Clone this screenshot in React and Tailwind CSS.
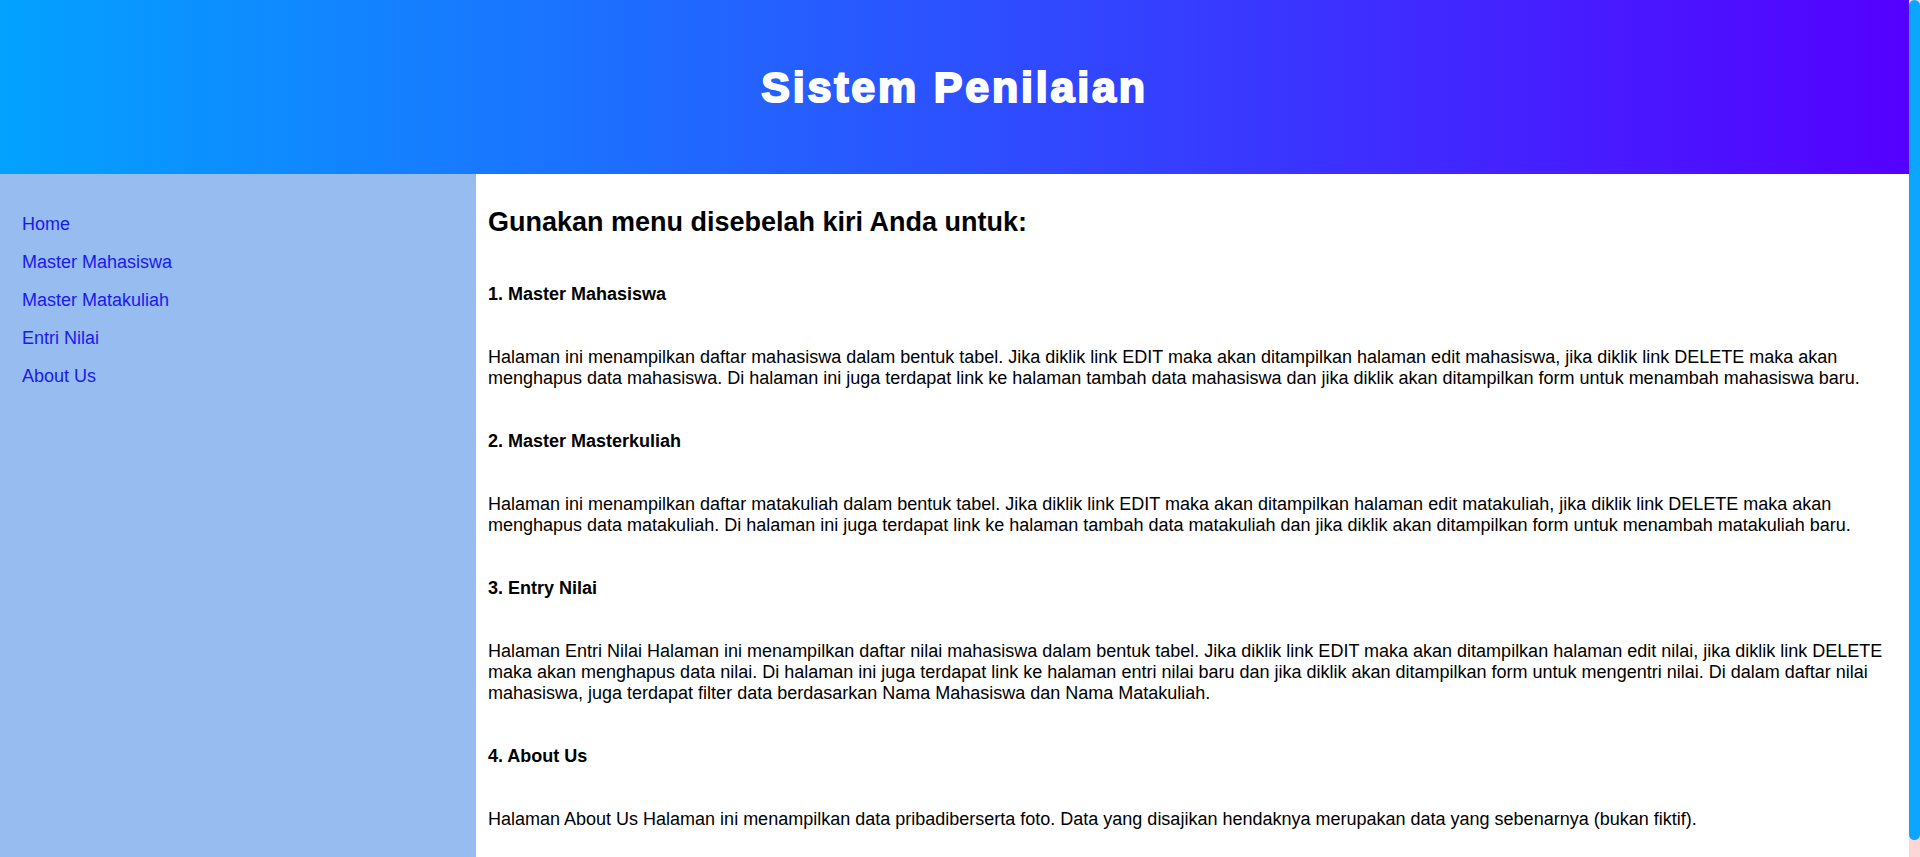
import React from 'react';

const menu = ['Home', 'Master Mahasiswa', 'Master Matakuliah', 'Entri Nilai', 'About Us'];

const sections = [
  {
    title: '1. Master Mahasiswa',
    text: 'Halaman ini menampilkan daftar mahasiswa dalam bentuk tabel. Jika diklik link EDIT maka akan ditampilkan halaman edit mahasiswa, jika diklik link DELETE maka akan menghapus data mahasiswa. Di halaman ini juga terdapat link ke halaman tambah data mahasiswa dan jika diklik akan ditampilkan form untuk menambah mahasiswa baru.',
  },
  {
    title: '2. Master Masterkuliah',
    text: 'Halaman ini menampilkan daftar matakuliah dalam bentuk tabel. Jika diklik link EDIT maka akan ditampilkan halaman edit matakuliah, jika diklik link DELETE maka akan menghapus data matakuliah. Di halaman ini juga terdapat link ke halaman tambah data matakuliah dan jika diklik akan ditampilkan form untuk menambah matakuliah baru.',
  },
  {
    title: '3. Entry Nilai',
    text: 'Halaman Entri Nilai Halaman ini menampilkan daftar nilai mahasiswa dalam bentuk tabel. Jika diklik link EDIT maka akan ditampilkan halaman edit nilai, jika diklik link DELETE maka akan menghapus data nilai. Di halaman ini juga terdapat link ke halaman entri nilai baru dan jika diklik akan ditampilkan form untuk mengentri nilai. Di dalam daftar nilai mahasiswa, juga terdapat filter data berdasarkan Nama Mahasiswa dan Nama Matakuliah.',
  },
  {
    title: '4. About Us',
    text: 'Halaman About Us Halaman ini menampilkan data pribadiberserta foto. Data yang disajikan hendaknya merupakan data yang sebenarnya (bukan fiktif).',
  },
];

const App = () => {
  return (
    <div className="flex h-screen overflow-hidden bg-white font-['Liberation_Sans',Arial,sans-serif] text-[18px] leading-[normal] text-black">
      <div className="flex min-w-0 flex-1 flex-col">
        {/* Header */}
        <header className="flex h-[174px] shrink-0 items-center justify-center bg-[linear-gradient(to_right,#03a2ff,#5500ff)]">
          <h1 className="text-[43px] font-bold tracking-[2.8px] text-white [-webkit-text-stroke:2px_white]">
            Sistem Penilaian
          </h1>
        </header>

        <div className="flex flex-1">
          {/* Sidebar */}
          <nav className="w-[476px] shrink-0 bg-[#97bcf0] pl-[22px] pt-[40px]">
            <ul className="flex flex-col gap-[17px]">
              {menu.map((item) => (
                <li key={item}>
                  <a href="#" className="text-[#1a1aee]">
                    {item}
                  </a>
                </li>
              ))}
            </ul>
          </nav>

          {/* Content */}
          <main className="flex-1 px-[12px] pb-[44px] pt-[33px]">
            <h2 className="text-[27px] font-bold">Gunakan menu disebelah kiri Anda untuk:</h2>
            <div className="mt-[46px] flex flex-col gap-[42px]">
              {sections.map((s) => (
                <React.Fragment key={s.title}>
                  <h4 className="font-bold">{s.title}</h4>
                  <p>{s.text}</p>
                </React.Fragment>
              ))}
            </div>
          </main>
        </div>
      </div>

      {/* Scrollbar */}
      <div className="flex w-[11px] shrink-0 flex-col bg-[#ffd6d6]">
        <div className="h-[840px] rounded-[6px] bg-[#0aa6ff]" />
      </div>
    </div>
  );
};

export default App;
